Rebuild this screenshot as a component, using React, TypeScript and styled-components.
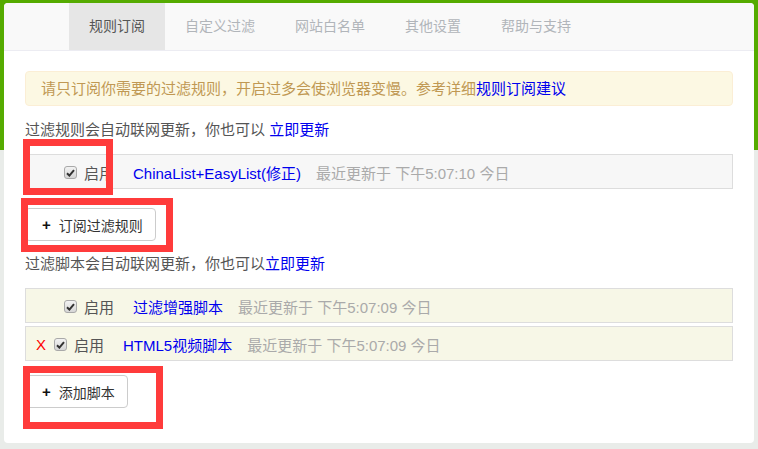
import React from 'react';
import styled, { createGlobalStyle } from 'styled-components';

const GlobalStyle = createGlobalStyle`
  html, body {
    margin: 0;
    padding: 0;
  }
  body {
    background: linear-gradient(#55ab00 0, #55ab00 150px, #e9ece9 150px);
    font-family: "Liberation Sans", "Noto Sans CJK SC", sans-serif;
    font-size: 15px;
    color: #555;
  }
`;

const Page = styled('div')`
  padding: 3px 4px 6px 4px;
`;

const Card = styled('div')`
  height: 440px;
  background: #ffffff;
  border-radius: 4px;
  overflow: hidden;
`;

const TabBar = styled('div')`
  display: flex;
  height: 47px;
  padding-left: 65px;
  background: #f9f9f9;
  border-bottom: 1px solid #ececf2;
`;

const Tab = styled('div')<{ $active?: boolean }>`
  padding: 0 20px;
  line-height: 47px;
  font-size: 14px;
  color: ${(p) => (p.$active ? '#555555' : '#b1b5ba')};
  background: ${(p) => (p.$active ? '#e6e6e6' : 'transparent')};
`;

const Content = styled('div')`
  padding: 20px 21px 0 21px;
`;

const Alert = styled('div')`
  box-sizing: border-box;
  height: 35px;
  padding: 0 15px;
  line-height: 33px;
  color: #c09853;
  background: #fcf8e3;
  border: 1px solid #fbeed5;
  border-radius: 4px;
`;

const Link = styled('a')`
  color: #0000ee;
  text-decoration: none;
`;

const Hint = styled('div')<{ $top: number }>`
  margin-top: ${(p) => p.$top}px;
  line-height: 20px;
`;

const RowList = styled('div')`
  display: flex;
  flex-direction: column;
  gap: 3px;
  margin-top: 14px;
`;

const Row = styled('div')<{ $tint?: boolean; $indent: number }>`
  position: relative;
  box-sizing: border-box;
  display: flex;
  align-items: center;
  height: 35px;
  padding: 2px 0 0 ${(p) => p.$indent}px;
  background: ${(p) => (p.$tint ? '#f7f7e7' : '#f7f7f7')};
  border: 1px solid #dddddd;
`;

const Remove = styled('span')`
  margin-right: 8px;
  color: #ff0000;
  font-size: 15px;
`;

const Check = styled('span')`
  box-sizing: border-box;
  display: inline-flex;
  align-items: center;
  justify-content: center;
  width: 13px;
  height: 13px;
  margin-right: 7px;
  border: 1px solid #a9a9a9;
  border-radius: 3px;
  background: linear-gradient(#f2f2f2, #d6d6d6);
`;

const Enable = styled('span')`
  margin-right: 19px;
  color: #555;
`;

const Name = styled('span')`
  margin-right: 15px;
  color: #0000ee;
`;

const Meta = styled('span')`
  color: #aaaaaa;
`;

const ButtonWrap = styled('div')<{ $top: number }>`
  position: relative;
  display: flex;
  margin-top: ${(p) => p.$top}px;
`;

const Button = styled('button')`
  display: flex;
  align-items: center;
  height: 33px;
  padding: 0 12px 0 16px;
  font-family: inherit;
  font-size: 14px;
  color: #333;
  background: #ffffff;
  border: 1px solid #cccccc;
  border-radius: 4px;
`;

const Plus = styled('b')`
  margin-right: 8px;
  font-size: 15px;
  color: #111;
`;

// red annotation boxes drawn over the screenshot
const Mark = styled('div')<{ $x: number; $y: number; $w: number; $h: number }>`
  position: absolute;
  box-sizing: border-box;
  left: ${(p) => p.$x}px;
  top: ${(p) => p.$y}px;
  width: ${(p) => p.$w}px;
  height: ${(p) => p.$h}px;
  border: 7px solid #ff3b3b;
  pointer-events: none;
`;

const CheckMark = () => (
  <Check>
    <svg width="9" height="8" viewBox="0 0 9 8">
      <path d="M1 4.2 L3.4 6.6 L8 1.2" fill="none" stroke="#333" strokeWidth="2" />
    </svg>
  </Check>
);

const tabs = ['规则订阅', '自定义过滤', '网站白名单', '其他设置', '帮助与支持'];

export default function App() {
  return (
    <Page>
      <GlobalStyle />
      <Card>
        <TabBar>
          {tabs.map((t, i) => (
            <Tab key={t} $active={i === 0}>
              {t}
            </Tab>
          ))}
        </TabBar>
        <Content>
          <Alert>
            请只订阅你需要的过滤规则，开启过多会使浏览器变慢。参考详细
            <Link href="#">规则订阅建议</Link>
          </Alert>

          <Hint $top={14}>
            过滤规则会自动联网更新，你也可以 <Link href="#">立即更新</Link>
          </Hint>
          <RowList>
            <Row $indent={38}>
              <CheckMark />
              <Enable>启用</Enable>
              <Name>ChinaList+EasyList(修正)</Name>
              <Meta>最近更新于 下午5:07:10 今日</Meta>
              <Mark $x={-3} $y={-16} $w={90} $h={56} />
            </Row>
          </RowList>
          <ButtonWrap $top={19}>
            <Button>
              <Plus>+</Plus>订阅过滤规则
            </Button>
            <Mark $x={-4} $y={-10} $w={152} $h={54} />
          </ButtonWrap>

          <Hint $top={13}>
            过滤脚本会自动联网更新，你也可以<Link href="#">立即更新</Link>
          </Hint>
          <RowList>
            <Row $tint $indent={38}>
              <CheckMark />
              <Enable>启用</Enable>
              <Name>过滤增强脚本</Name>
              <Meta>最近更新于 下午5:07:09 今日</Meta>
            </Row>
            <Row $tint $indent={10}>
              <Remove>X</Remove>
              <CheckMark />
              <Enable>启用</Enable>
              <Name>HTML5视频脚本</Name>
              <Meta>最近更新于 下午5:07:09 今日</Meta>
            </Row>
          </RowList>
          <ButtonWrap $top={14}>
            <Button>
              <Plus>+</Plus>添加脚本
            </Button>
            <Mark $x={-2} $y={-9} $w={140} $h={63} />
          </ButtonWrap>
        </Content>
      </Card>
    </Page>
  );
}
